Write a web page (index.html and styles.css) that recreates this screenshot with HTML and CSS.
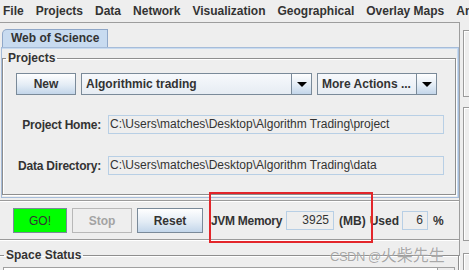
FILE: index.html
```html
<!DOCTYPE html>
<html lang="en">
<head>
<meta charset="UTF-8">
<title>Web of Science</title>
<link rel="stylesheet" href="styles.css">
</head>
<body>
<div class="menubar">
    <span class="menu first">File</span>
    <span class="menu">Projects</span>
    <span class="menu">Data</span>
    <span class="menu">Network</span>
    <span class="menu">Visualization</span>
    <span class="menu">Geographical</span>
    <span class="menu">Overlay Maps</span>
    <span class="menu">An</span>
</div>
<div class="main">
    <div class="workspace">
        <div class="tabs">
            <div class="tab">Web of Science</div>
        </div>
        <div class="tabpanel">
            <fieldset class="group projects">
                <legend>Projects</legend>
                <div class="group-body">
                    <div class="project-row">
                        <button class="btn new">New</button>
                        <div class="combo project-combo">
                            <span class="combo-text">Algorithmic trading</span>
                            <span class="combo-arrow"></span>
                        </div>
                        <div class="combo actions-combo">
                            <span class="combo-text">More Actions ...</span>
                            <span class="combo-arrow"></span>
                        </div>
                    </div>
                    <div class="paths">
                        <label>Project Home:</label>
                        <div class="field">C:\Users\matches\Desktop\Algorithm Trading\project</div>
                        <label>Data Directory:</label>
                        <div class="field">C:\Users\matches\Desktop\Algorithm Trading\data</div>
                    </div>
                </div>
            </fieldset>
        </div>
        <div class="runbar">
            <button class="btn go">GO!</button>
            <button class="btn stop" disabled>Stop</button>
            <button class="btn reset">Reset</button>
            <span class="jvm-label">JVM Memory</span>
            <div class="field num mem">3925</div>
            <span class="unit">(MB)</span>
            <span class="used-label">Used</span>
            <div class="field num used">6</div>
            <span class="pct">%</span>
        </div>
        <fieldset class="group status">
            <legend>Space Status</legend>
            <div class="status-area">
                <div class="scrollbar"></div>
            </div>
        </fieldset>
    </div>
    <div class="side">
        <div class="side-box one"></div>
        <div class="side-box two"></div>
        <div class="side-box three"></div>
    </div>
</div>
<div class="highlight"></div>
<div class="watermark"><span class="latin">CSDN @</span>火柴先生</div>
</body>
</html>
```

FILE: styles.css
```css
body {
  margin: 0;
  width: 469px;
  height: 270px;
  overflow: hidden;
  position: relative;
  background-color: #eeeeee;
  color: #333;
  font-family: 'Liberation Sans', Arial, sans-serif;
  font-size: 12px;
}

/* menu */
.menubar {
  height: 22px;
  display: flex;
  align-items: center;
  gap: 12px;
  padding-left: 3px;
  font-weight: bold;
  white-space: nowrap;
  overflow: hidden;
}

.main {
  display: flex;
  height: 248px;
  overflow: hidden;
}

.workspace {
  width: 459px;
  flex: none;
  border-top: 1px solid #9d9d9d;
  border-right: 1px solid #9d9d9d;
}

/* tab */
.tabs {
  display: flex;
  padding: 6px 0 0 2px;
}

.tab {
  height: 17px;
  line-height: 17px;
  padding: 0 8px;
  font-weight: bold;
  background-color: #c8dbf0;
  border: 1px solid #8fa7c8;
  border-bottom: none;
  border-top-left-radius: 5px;
}

.tabpanel {
  margin-left: 1px;
  padding: 3px 2px 2px 0;
  border: 1px solid #a6bcd9;
  box-shadow: inset 0 1px 0 #c8dbf0, inset -1px 0 0 #c8dbf0;
}

/* etched titled groups */
.group {
  margin: 0;
  padding: 0;
  min-width: 0;
  border: 1px solid #8e8e8e;
  box-shadow: 1px 1px 0 #fff, inset 1px 1px 0 #fff;
}

.group legend {
  margin-left: 3px;
  padding: 0 2px;
  font-weight: bold;
}

.group-body {
  padding: 8px 11px 19px 12px;
}

.project-row {
  display: flex;
  gap: 5px;
  height: 22px;
  padding-left: 1px;
}

.btn {
  font-family: inherit;
  font-size: 12px;
  font-weight: bold;
  color: #333;
  padding: 0;
  border: 1px solid #7a8a99;
  background: linear-gradient(#ffffff, #e3ecf5 55%, #c3d6ea);
}

.new {
  width: 60px;
  height: 22px;
}

.combo {
  display: flex;
  height: 22px;
  box-sizing: border-box;
  border: 1px solid #7a8a99;
}

.project-combo {
  width: 231px;
}

.actions-combo {
  width: 120px;
}

.combo-text {
  flex: 1;
  padding-left: 4px;
  line-height: 20px;
  font-weight: bold;
  white-space: nowrap;
  overflow: hidden;
  background: linear-gradient(#f7f9fc, #e6ecf3);
}

.combo-arrow {
  width: 19px;
  display: flex;
  align-items: center;
  justify-content: center;
  border-left: 1px solid #7a8a99;
  background: linear-gradient(#ffffff, #e3ecf5 55%, #c3d6ea);
}

.combo-arrow::after {
  content: '';
  border-left: 5px solid transparent;
  border-right: 5px solid transparent;
  border-top: 5px solid #000;
}

.paths {
  display: grid;
  grid-template-columns: 86px 1fr;
  grid-auto-rows: 19px;
  column-gap: 7px;
  row-gap: 22px;
  margin-top: 20px;
  align-items: center;
}

.paths label {
  justify-self: end;
  font-weight: bold;
  white-space: nowrap;
  letter-spacing: -0.2px;
}

.field {
  height: 19px;
  box-sizing: border-box;
  padding-left: 1px;
  line-height: 17px;
  border: 1px solid #b8cfe5;
  background-color: #eeeeee;
  white-space: nowrap;
  overflow: hidden;
}

/* run controls */
.runbar {
  display: flex;
  align-items: center;
  margin-top: 2px;
  padding: 7px 0 6px 13px;
  border-top: 1px solid #9a9a9a;
  border-bottom: 1px solid #9a9a9a;
  box-shadow: 0 1px 0 #fff, inset 0 1px 0 #fff;
  font-weight: bold;
}

.runbar .btn {
  height: 25px;
  margin-right: 5px;
}

.go {
  width: 54px;
  font-weight: normal;
  background: #00ff00;
}

.stop {
  width: 60px;
  color: #a3a3a3;
  border-color: #b8b8b8;
  background: #eeeeee;
}

.reset {
  width: 66px;
}

.jvm-label {
  margin-left: 3px;
  letter-spacing: -0.3px;
}

.num {
  text-align: right;
  font-weight: normal;
  padding: 0 4px 0 0;
}

.mem {
  width: 48px;
  margin-left: 4px;
}

.unit {
  margin-left: 5px;
}

.used-label {
  margin-left: 4px;
}

.used {
  width: 26px;
  margin-left: 3px;
}

.pct {
  margin-left: 5px;
}

/* space status */
.status {
  margin: 8px 0 0 -2px;
}

.status legend {
  margin-left: 5px;
}

.status-area {
  display: flex;
  justify-content: flex-end;
  height: 20px;
  margin: 5px 3px 0 4px;
  border: 1px solid #a0a0a0;
  background-color: #fff;
}

.scrollbar {
  width: 16px;
  border-left: 1px solid #a0a0a0;
  background-color: #eeeeee;
}

/* right split */
.side {
  flex: 1;
  padding: 8px 0 0 3px;
}

.side-box {
  border: 1px solid #9a9a9a;
  border-right: none;
  box-shadow: inset 1px 1px 0 #fff;
}

.side-box.one {
  height: 65px;
}

.side-box.two {
  height: 132px;
  margin-top: 10px;
}

.side-box.three {
  height: 30px;
  margin-top: 12px;
}

/* annotation over the screenshot */
.highlight {
  position: absolute;
  left: 209px;
  top: 192px;
  width: 164px;
  height: 51px;
  box-sizing: border-box;
  border: 2px solid #e3262b;
}

.watermark {
  position: absolute;
  left: 330px;
  top: 245px;
  font-family: 'Noto Sans CJK SC', sans-serif;
  font-size: 16px;
  line-height: 18px;
  color: rgba(95, 95, 95, 0.55);
  text-shadow: 0 0 1px rgba(255, 255, 255, 0.9);
  white-space: nowrap;
}

.watermark .latin {
  font-family: 'Liberation Sans', sans-serif;
  font-size: 13px;
  letter-spacing: -0.5px;
}
```
